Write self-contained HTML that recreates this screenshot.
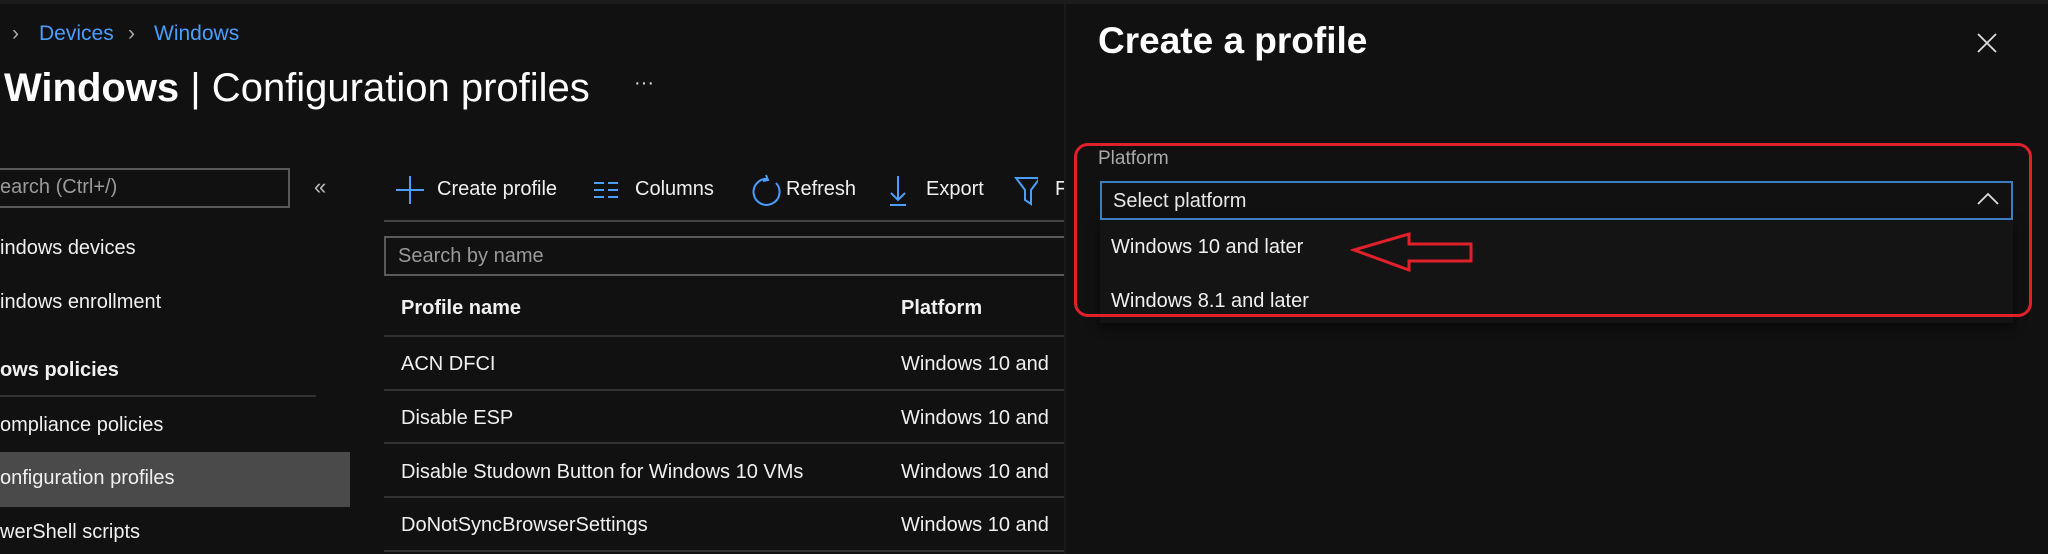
<!DOCTYPE html>
<html><head><meta charset="utf-8"><style>
*{margin:0;padding:0;box-sizing:border-box}
body{width:2048px;height:554px;background:#111;color:#fff;font-family:"Liberation Sans",sans-serif;position:relative;overflow:hidden}
.a{position:absolute;white-space:nowrap}
.t{font-size:20px;color:#f0f0f0}
.hl{position:absolute;height:2px;background:#333}
</style></head><body>
<div class="a" style="left:0;top:0;width:2048px;height:4px;background:#1c1c1c"></div>
<div class="a" style="left:12px;top:22px;font-size:21px;color:#aaa">›</div>
<div class="a" style="left:39px;top:22px;font-size:21px;color:#4a9eff">Devices</div>
<div class="a" style="left:128px;top:22px;font-size:21px;color:#aaa">›</div>
<div class="a" style="left:154px;top:22px;font-size:21px;color:#4a9eff">Windows</div>
<div class="a" style="left:4px;top:66px;font-size:40px;color:#fff"><b>Windows</b> | Configuration profiles</div>
<div class="a" style="left:634px;top:72px;font-size:20px;color:#ddd">···</div>

<div class="a" style="left:-2px;top:168px;width:292px;height:40px;border:2px solid #5a5a5a"></div>
<div class="a" style="left:0;top:176px;font-size:20px;color:#9a9a9a">earch (Ctrl+/)</div>
<div class="a" style="left:314px;top:174px;font-size:22px;color:#bbb">«</div>
<div class="a t" style="left:0;top:237px">indows devices</div>
<div class="a t" style="left:0;top:291px">indows enrollment</div>
<div class="a t" style="left:0;top:359px;font-weight:bold">ows policies</div>
<div class="hl" style="left:0;top:395px;width:316px"></div>
<div class="a t" style="left:0;top:414px">ompliance policies</div>
<div class="a" style="left:0;top:452px;width:350px;height:55px;background:#4a4a4a"></div>
<div class="a t" style="left:0;top:467px">onfiguration profiles</div>
<div class="a t" style="left:0;top:521px">werShell scripts</div>

<svg class="a" style="left:388px;top:172px" width="650" height="38">
<g stroke="#4a9eff" stroke-width="2" fill="none">
<path d="M22 4v28M8 18h28"/>
<path d="M206 11h10M206 18h10M206 25h10M220 11h10M220 18h10M220 25h10"/>
<path d="M380 7a13 13 0 1 0 8 4M378 3l2 5-5 1"/>
<path d="M510 4v24M503 21l7 7 7-7M502 33h16"/>
<path d="M628 6h24l-9 12v14l-6-4v-10z"/>
</g></svg>
<div class="a t" style="left:437px;top:178px">Create profile</div>
<div class="a t" style="left:635px;top:178px">Columns</div>
<div class="a t" style="left:786px;top:178px">Refresh</div>
<div class="a t" style="left:926px;top:178px">Export</div>
<div class="a t" style="left:1055px;top:178px">F</div>
<div class="hl" style="left:384px;top:220px;width:682px;background:#444"></div>
<div class="a" style="left:384px;top:236px;width:700px;height:40px;border:2px solid #5a5a5a"></div>
<div class="a" style="left:398px;top:245px;font-size:20px;color:#9a9a9a">Search by name</div>
<div class="a t" style="left:401px;top:297px;font-weight:bold">Profile name</div>
<div class="a t" style="left:901px;top:297px;font-weight:bold">Platform</div>
<div class="hl" style="left:384px;top:335px;width:682px"></div>
<div class="a t" style="left:401px;top:353px">ACN DFCI</div><div class="a t" style="left:901px;top:353px">Windows 10 and</div>
<div class="hl" style="left:384px;top:389px;width:682px"></div>
<div class="a t" style="left:401px;top:407px">Disable ESP</div><div class="a t" style="left:901px;top:407px">Windows 10 and</div>
<div class="hl" style="left:384px;top:442px;width:682px"></div>
<div class="a t" style="left:401px;top:461px">Disable Studown Button for Windows 10 VMs</div><div class="a t" style="left:901px;top:461px">Windows 10 and</div>
<div class="hl" style="left:384px;top:496px;width:682px"></div>
<div class="a t" style="left:401px;top:514px">DoNotSyncBrowserSettings</div><div class="a t" style="left:901px;top:514px">Windows 10 and</div>
<div class="hl" style="left:384px;top:550px;width:682px"></div>

<div class="a" style="left:1064px;top:4px;width:984px;height:550px;background:#111;border-left:2px solid #1a1a1a"></div>
<div class="a" style="left:1098px;top:20px;font-size:37px;font-weight:bold;color:#fff">Create a profile</div>
<svg class="a" style="left:1976px;top:32px" width="22" height="22"><path d="M2 2L20 20M20 2L2 20" stroke="#ddd" stroke-width="1.8"/></svg>
<div class="a" style="left:1100px;top:219px;width:913px;height:104px;background:#141414;box-shadow:0 4px 10px rgba(0,0,0,.6)"></div>
<div class="a" style="left:1098px;top:148px;font-size:19px;color:#aaa">Platform</div>
<div class="a" style="left:1100px;top:181px;width:913px;height:39px;border:2px solid #3a7fc1"></div>
<div class="a" style="left:1113px;top:190px;font-size:20px;color:#e8e8e8">Select platform</div>
<svg class="a" style="left:1976px;top:190px" width="24" height="18"><path d="M2 14L12 4L22 14" stroke="#ddd" stroke-width="1.8" fill="none"/></svg>
<div class="a t" style="left:1111px;top:236px">Windows 10 and later</div>
<div class="a t" style="left:1111px;top:290px">Windows 8.1 and later</div>
<svg class="a" style="left:1350px;top:232px" width="126" height="40"><path d="M4 18L59 2v10h62v17H59v9z" stroke="#e0202a" stroke-width="3" fill="none"/></svg>
<div class="a" style="left:1074px;top:143px;width:958px;height:174px;border:3px solid #e0202a;border-radius:14px"></div>
</body></html>
